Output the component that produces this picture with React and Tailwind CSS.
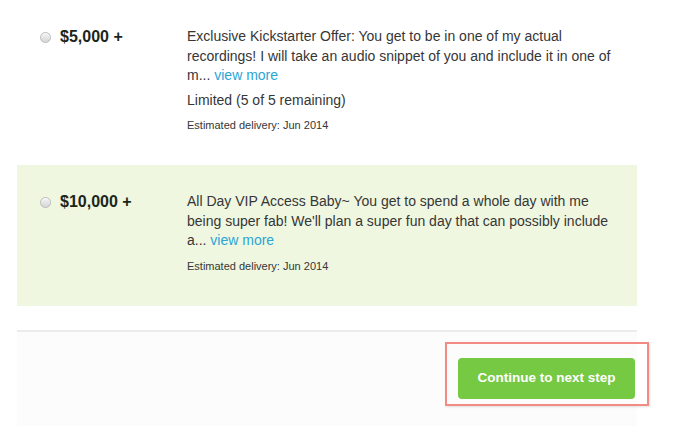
import React from 'react';

const rewards = [
  {
    id: 'r5000',
    amount: '$5,000 +',
    text: 'Exclusive Kickstarter Offer: You get to be in one of my actual recordings! I will take an audio snippet of you and include it in one of m...',
    limited: 'Limited (5 of 5 remaining)',
    delivery: 'Estimated delivery: Jun 2014',
    highlight: false,
  },
  {
    id: 'r10000',
    amount: '$10,000 +',
    text: "All Day VIP Access Baby~ You get to spend a whole day with me being super fab! We'll plan a super fun day that can possibly include a...",
    limited: null,
    delivery: 'Estimated delivery: Jun 2014',
    highlight: true,
  },
];

function Radio() {
  return (
    <span className="mt-[5px] block h-[11px] w-[11px] shrink-0 rounded-full border border-[#b9b9b9] bg-gradient-to-b from-[#f4f4f4] to-[#d6d6d6] shadow-[inset_0_1px_1px_rgba(255,255,255,0.8)]"></span>
  );
}

function RewardRow({ reward }) {
  return (
    <div
      className={`flex pl-[23px] pt-[27px] pb-[33px] ${reward.highlight ? 'bg-[#eff7e1]' : 'bg-white'}`}
    >
      {/* amount column */}
      <div className="flex w-[147px] shrink-0 items-start gap-[9px]">
        <Radio />
        <span className="text-[16px] font-bold leading-[20px] text-[#1b261b]">{reward.amount}</span>
      </div>

      {/* description column */}
      <div className="w-[432px] text-[14px] text-[#363636]">
        <p className="leading-[19.5px]">
          {reward.text}{' '}
          <a href="#" className="text-[#2ba6d6]">view more</a>
        </p>
        {reward.limited && (
          <p className="mt-[5px] leading-[19.5px]">{reward.limited}</p>
        )}
        <p className="mt-[8px] text-[11px] leading-[14px]">{reward.delivery}</p>
      </div>
    </div>
  );
}

export default function App() {
  return (
    <div className="h-[435px] w-[700px] overflow-hidden bg-white font-['Liberation_Sans',Arial,sans-serif]">
      <div className="ml-[17px] w-[620px]">
        {rewards.map((r) => (
          <RewardRow key={r.id} reward={r} />
        ))}

        {/* footer */}
        <div className="mt-[24px] h-[96px] border-t-2 border-[#ececec] bg-[#fcfcfc]">
          <div className="flex justify-end pr-[2px] pt-[26px]">
            <div className="relative">
              <button className="h-[41px] w-[177px] rounded-[4px] bg-[#76c942] text-[13.5px] font-bold text-white">
                Continue to next step
              </button>
              {/* highlight frame */}
              <span className="pointer-events-none absolute -top-[16px] -bottom-[7px] -left-[13px] -right-[14px] border-2 border-[#f48a84] shadow-[1px_1px_2px_rgba(0,0,0,0.12)]"></span>
            </div>
          </div>
        </div>
      </div>
    </div>
  );
}
